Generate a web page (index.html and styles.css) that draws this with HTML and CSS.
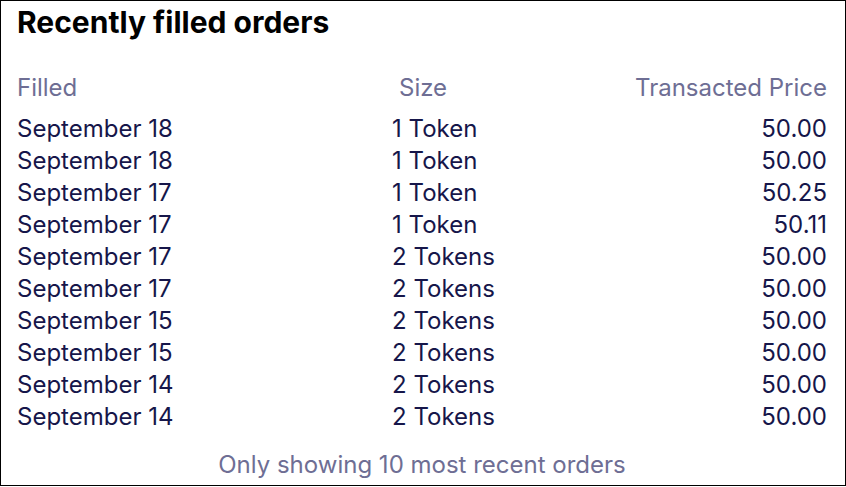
FILE: index.html
```html
<!DOCTYPE html>
<html>
<head>
<meta charset="utf-8">
<link rel="stylesheet" href="styles.css">
</head>
<body>
<div class="card">
  <h1 class="title">Recently filled orders</h1>
  <div class="table">
    <div class="row head">
      <div class="c1">Filled</div><div class="c2">Size</div><div class="c3">Transacted Price</div>
    </div>
    <div class="row"><div class="c1">September 18</div><div class="c2">1 Token</div><div class="c3">50.00</div></div>
    <div class="row"><div class="c1">September 18</div><div class="c2">1 Token</div><div class="c3">50.00</div></div>
    <div class="row"><div class="c1">September 17</div><div class="c2">1 Token</div><div class="c3">50.25</div></div>
    <div class="row"><div class="c1">September 17</div><div class="c2">1 Token</div><div class="c3">50.11</div></div>
    <div class="row"><div class="c1">September 17</div><div class="c2">2 Tokens</div><div class="c3">50.00</div></div>
    <div class="row"><div class="c1">September 17</div><div class="c2">2 Tokens</div><div class="c3">50.00</div></div>
    <div class="row"><div class="c1">September 15</div><div class="c2">2 Tokens</div><div class="c3">50.00</div></div>
    <div class="row"><div class="c1">September 15</div><div class="c2">2 Tokens</div><div class="c3">50.00</div></div>
    <div class="row"><div class="c1">September 14</div><div class="c2">2 Tokens</div><div class="c3">50.00</div></div>
    <div class="row"><div class="c1">September 14</div><div class="c2">2 Tokens</div><div class="c3">50.00</div></div>
  </div>
  <p class="note">Only showing 10 most recent orders</p>
</div>
</body>
</html>
```
FILE: styles.css
```css
html, body {
  margin: 0;
  padding: 0;
  background: #fff;
}
body {
  font-family: Inter, "Liberation Sans", sans-serif;
}
.card {
  box-sizing: border-box;
  width: 846px;
  height: 486px;
  border: 1px solid #000;
  padding: 3px 18px 0 16px;
}
.title {
  margin: 0;
  font-size: 30px;
  font-weight: 700;
  line-height: 36px;
  color: #000;
}
.table {
  margin-top: 32px;
}
.row {
  display: grid;
  grid-template-columns: 375px 1fr auto;
  font-size: 24px;
  line-height: 32px;
  color: #16164a;
}
.row.head {
  color: #6e6e94;
  margin-bottom: 9px;
}
.row.head .c2 {
  padding-left: 7px;
}
.c3 {
  text-align: right;
}
.note {
  margin: 16px 0 0;
  text-align: center;
  font-size: 24px;
  line-height: 32px;
  color: #6e6e94;
}
```
